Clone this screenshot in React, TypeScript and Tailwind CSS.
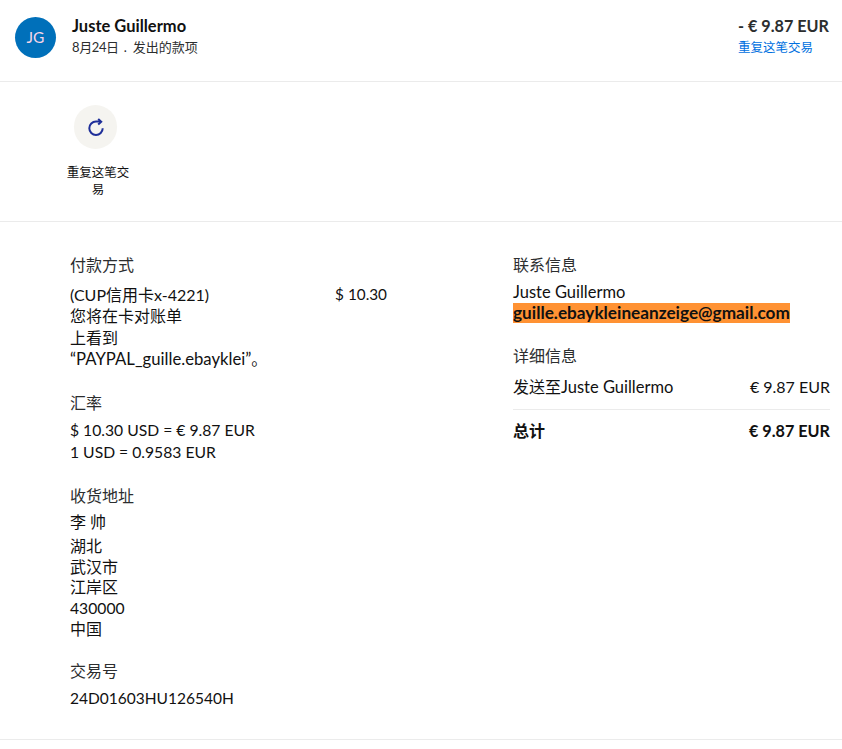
const font = 'font-["Lato","Noto_Sans_CJK_SC",sans-serif]';

function Label({ children }: { children: React.ReactNode }) {
  return <div className="text-[16px] leading-[22px] text-[#2c2e2f]">{children}</div>;
}

// CJK runs sit at 16px, a touch bigger than the latin body text
function Cjk({ children }: { children: React.ReactNode }) {
  return <span className="text-[16px] leading-none">{children}</span>;
}

function RepeatIcon() {
  return (
    <svg width="18" height="18" viewBox="0 0 18 18" fill="none" stroke="#1f2f99" strokeWidth="2">
      <path d="M15.7 10.3A6.7 6.7 0 1 1 9 3.6H13.6" />
      <path d="M11.2 0.9L14.2 3.7L11.2 6.4" />
    </svg>
  );
}

export default function App() {
  return (
    <div className={`${font} w-[842px] h-[749px] bg-white text-[#111] overflow-hidden`}>
      {/* header */}
      <div className="h-[82px] border-b border-[#ebebeb] flex justify-between pl-[15px] pr-[11px]">
        <div className="flex">
          <div className="mt-[17px] w-[41px] h-[41px] rounded-full bg-[#0070ba] text-[#f5d5e8] flex items-center justify-center text-[15.5px]">
            JG
          </div>
          <div className="ml-[16px] mt-[15px]">
            <div className="text-[16.5px] leading-[22px] font-bold">Juste Guillermo</div>
            <div className="text-[13px] leading-[20px] text-[#2c2e2f]">
              <span className="tracking-[-0.4px]">8月24日</span>
              <span className="ml-[5px] mr-[6px]">.</span>发出的款项
            </div>
          </div>
        </div>
        <div className="mt-[15px] w-[93px]">
          <div className="text-[16.2px] leading-[22px] font-bold text-[#2c2e2f] whitespace-nowrap">- € 9.87 EUR</div>
          <div className="text-[12.5px] leading-[21px] text-[#0070e0] whitespace-nowrap">重复这笔交易</div>
        </div>
      </div>

      {/* repeat action */}
      <div className="h-[140px] border-b border-[#ebebeb] pl-[66px] pt-[23px]">
        <div className="w-[64px] flex flex-col items-start">
          <div className="ml-[8px] w-[43px] h-[44px] rounded-full bg-[#f5f4f0] flex items-center justify-center">
            <RepeatIcon />
          </div>
          <div className="mt-[15px] text-[12.5px] leading-[17px] text-center">重复这笔交易</div>
        </div>
      </div>

      {/* details */}
      <div className="h-[518px] border-b border-[#ebebeb] flex pl-[70px] pr-[12px] pt-[32px]">
        <div className="w-[317px] mr-[126px] text-[15.7px]">
          <Label>付款方式</Label>
          <div className="mt-[8px] flex justify-between leading-[21.75px]">
            <div>
              <div className="text-[16px]">(CUP信用卡x-4221)</div>
              <div><Cjk>您将在卡对账单</Cjk></div>
              <div><Cjk>上看到</Cjk></div>
              <div><span className="text-[16.7px] leading-none">“PAYPAL_guille.ebayklei”</span><Cjk>。</Cjk></div>
            </div>
            <div className="text-[15.3px]">$ 10.30</div>
          </div>
          <div className="mt-[21px]"><Label>汇率</Label></div>
          <div className="mt-[5px] leading-[22px]">
            <div>$ 10.30 USD = € 9.87 EUR</div>
            <div>1 USD = 0.9583 EUR</div>
          </div>
          <div className="mt-[22px]"><Label>收货地址</Label></div>
          <div className="mt-[5px] leading-[20.8px] text-[16px]">
            <div className="mb-[3px]">李 帅</div>
            <div>湖北</div>
            <div>武汉市</div>
            <div>江岸区</div>
            <div className="text-[15.7px]">430000</div>
            <div>中国</div>
          </div>
          <div className="mt-[20px]"><Label>交易号</Label></div>
          <div className="mt-[5px] leading-[22px] text-[15.5px]">24D01603HU126540H</div>
        </div>

        <div className="w-[317px] text-[15.7px]">
          <Label>联系信息</Label>
          <div className="mt-[5px] leading-[22px] text-[16.5px]">Juste Guillermo</div>
          <div className="leading-[20px]">
            <span className="inline-block bg-[#ff9233] font-bold text-[17.2px]">guille.ebaykleineanzeige@gmail.com</span>
          </div>
          <div className="mt-[22px]"><Label>详细信息</Label></div>
          <div className="mt-[9px] flex justify-between leading-[22px] pb-[11px] border-b border-[#ebebeb]">
            <span><Cjk>发送至</Cjk><span className="text-[16.5px] leading-none">Juste Guillermo</span></span>
            <span className="text-[16px]">€ 9.87 EUR</span>
          </div>
          <div className="mt-[10px] flex justify-between leading-[22px] font-bold">
            <span className="text-[16px]">总计</span>
            <span className="text-[16.2px]">€ 9.87 EUR</span>
          </div>
        </div>
      </div>
    </div>
  );
}
